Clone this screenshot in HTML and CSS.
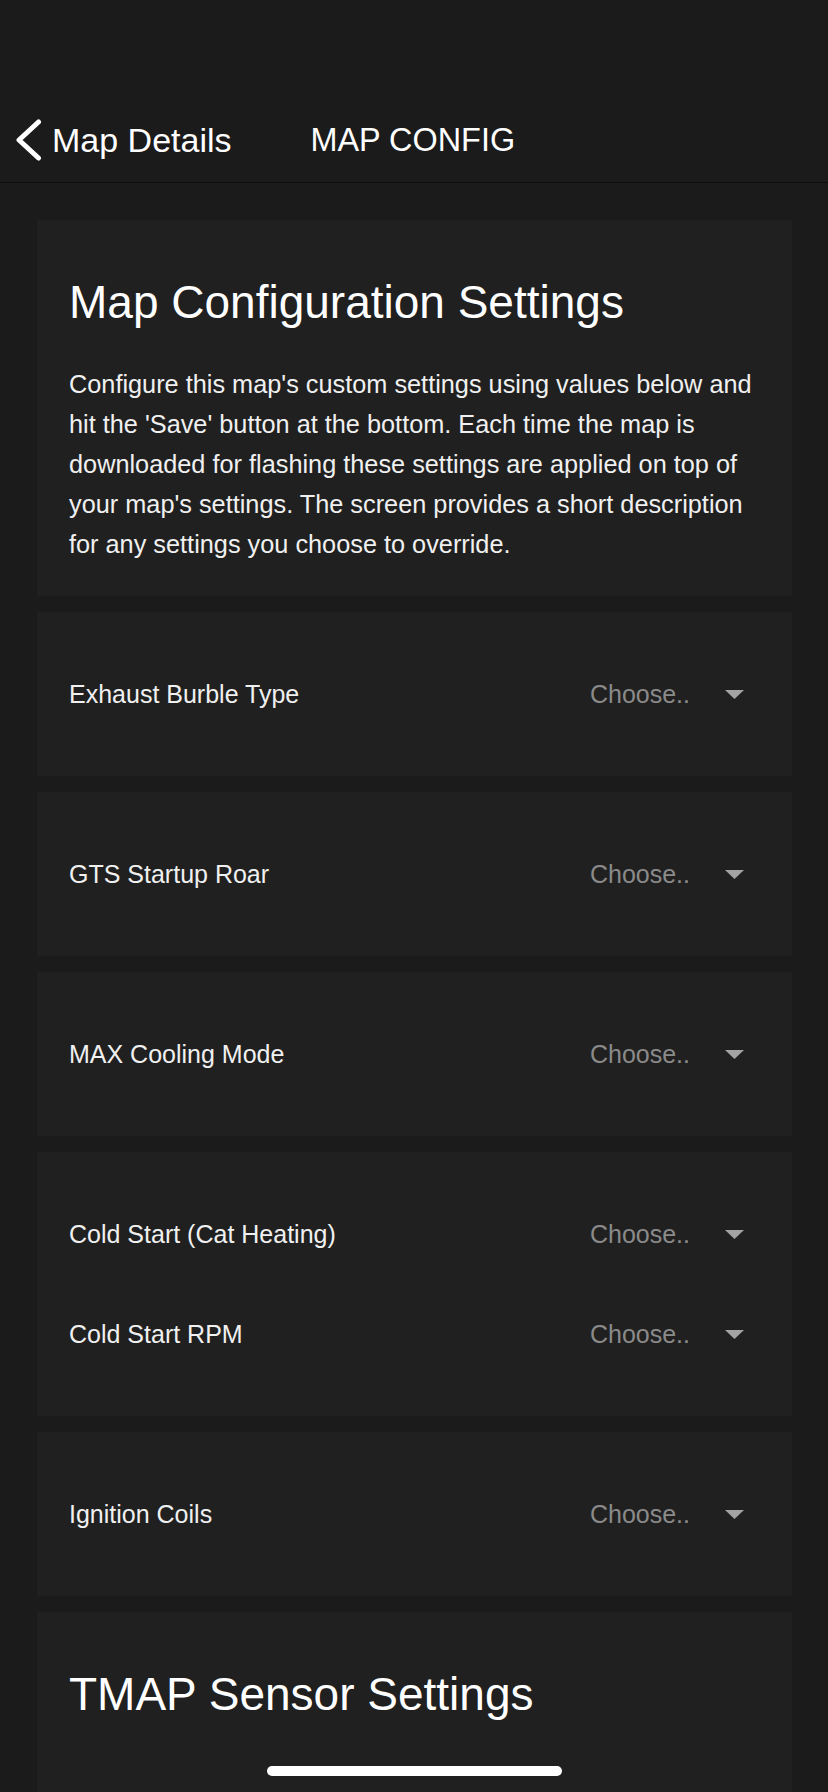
FILE: index.html
```html
<!DOCTYPE html>
<html lang="en">
<head>
<meta charset="utf-8">
<title>Map Config</title>
<link rel="stylesheet" href="styles.css">
</head>
<body>
<header class="topbar">
  <nav class="nav">
    <a class="back" href="#">
      <svg class="back-icon" viewBox="0 0 30 42" width="30" height="42" aria-hidden="true">
        <path d="M24.5 3 L5 21 L24.5 39" fill="none" stroke="#ffffff" stroke-width="5" stroke-linecap="round" stroke-linejoin="round"/>
      </svg>
      <span class="back-label">Map Details</span>
    </a>
    <span class="nav-title">MAP CONFIG</span>
  </nav>
</header>

<main class="content">
  <section class="card intro">
    <h1 class="card-title">Map Configuration Settings</h1>
    <p class="card-text">Configure this map's custom settings using values below and hit the 'Save' button at the bottom. Each time the map is downloaded for flashing these settings are applied on top of your map's settings. The screen provides a short description for any settings you choose to override.</p>
  </section>

  <section class="card options">
    <div class="row"><span class="label">Exhaust Burble Type</span><span class="select"><span class="placeholder">Choose..</span><svg class="caret" viewBox="0 0 19 9" width="19" height="9" aria-hidden="true"><path d="M0 0 H19 L9.5 9 Z" fill="currentColor"/></svg></span></div>
  </section>

  <section class="card options">
    <div class="row"><span class="label">GTS Startup Roar</span><span class="select"><span class="placeholder">Choose..</span><svg class="caret" viewBox="0 0 19 9" width="19" height="9" aria-hidden="true"><path d="M0 0 H19 L9.5 9 Z" fill="currentColor"/></svg></span></div>
  </section>

  <section class="card options">
    <div class="row"><span class="label">MAX Cooling Mode</span><span class="select"><span class="placeholder">Choose..</span><svg class="caret" viewBox="0 0 19 9" width="19" height="9" aria-hidden="true"><path d="M0 0 H19 L9.5 9 Z" fill="currentColor"/></svg></span></div>
  </section>

  <section class="card options">
    <div class="row"><span class="label">Cold Start (Cat Heating)</span><span class="select"><span class="placeholder">Choose..</span><svg class="caret" viewBox="0 0 19 9" width="19" height="9" aria-hidden="true"><path d="M0 0 H19 L9.5 9 Z" fill="currentColor"/></svg></span></div>
    <div class="row"><span class="label">Cold Start RPM</span><span class="select"><span class="placeholder">Choose..</span><svg class="caret" viewBox="0 0 19 9" width="19" height="9" aria-hidden="true"><path d="M0 0 H19 L9.5 9 Z" fill="currentColor"/></svg></span></div>
  </section>

  <section class="card options">
    <div class="row"><span class="label">Ignition Coils</span><span class="select"><span class="placeholder">Choose..</span><svg class="caret" viewBox="0 0 19 9" width="19" height="9" aria-hidden="true"><path d="M0 0 H19 L9.5 9 Z" fill="currentColor"/></svg></span></div>
  </section>

  <section class="card intro tail">
    <h2 class="card-title">TMAP Sensor Settings</h2>
  </section>
</main>

<div class="home-indicator"></div>
</body>
</html>
```

FILE: styles.css
```css
html, body {
  margin: 0;
  padding: 0;
}

body {
  background: #1b1b1b;
  color: #f2f2f2;
  font-family: "Liberation Sans", Arial, "Helvetica Neue", sans-serif;
}

.topbar {
  height: 182px;
  display: flex;
  align-items: flex-end;
  border-bottom: 1px solid #0e0e0e;
}

.nav {
  height: 84px;
  display: flex;
  align-items: center;
  padding-left: 14px;
}

.back {
  display: flex;
  align-items: center;
  color: #ffffff;
  text-decoration: none;
}

.back-icon {
  display: block;
}

.back-label {
  margin-left: 8px;
  font-size: 34px;
}

.nav-title {
  margin-left: 79px;
  font-size: 32.4px;
  color: #ffffff;
}

.content {
  display: flex;
  flex-direction: column;
  gap: 16px;
  padding: 37px 36px 0 37px;
}

.card {
  background: #202020;
  box-shadow: 0 0 1px rgba(255, 255, 255, 0.04);
}

.intro {
  padding: 54px 32px 32px 32px;
}

.card-title {
  margin: 0;
  font-size: 46px;
  line-height: 56px;
  font-weight: normal;
  color: #ffffff;
}

.card-text {
  margin: 34px 0 0 0;
  font-size: 25.3px;
  line-height: 40px;
  color: #f0f0f0;
}

.tail {
  min-height: 300px;
}

.options {
  padding: 32px 48px 32px 32px;
}

.row {
  height: 100px;
  display: flex;
  align-items: center;
  justify-content: space-between;
}

.label {
  font-size: 25px;
  color: #f0f0f0;
}

.select {
  display: flex;
  align-items: center;
}

.placeholder {
  font-size: 25px;
  color: #8a8a8a;
}

.caret {
  display: block;
  margin-left: 35px;
  color: #a3a3a3;
}

.home-indicator {
  position: fixed;
  left: 50%;
  bottom: 16px;
  width: 295px;
  height: 10px;
  margin-left: -147px;
  border-radius: 5px;
  background: #ffffff;
}
```
